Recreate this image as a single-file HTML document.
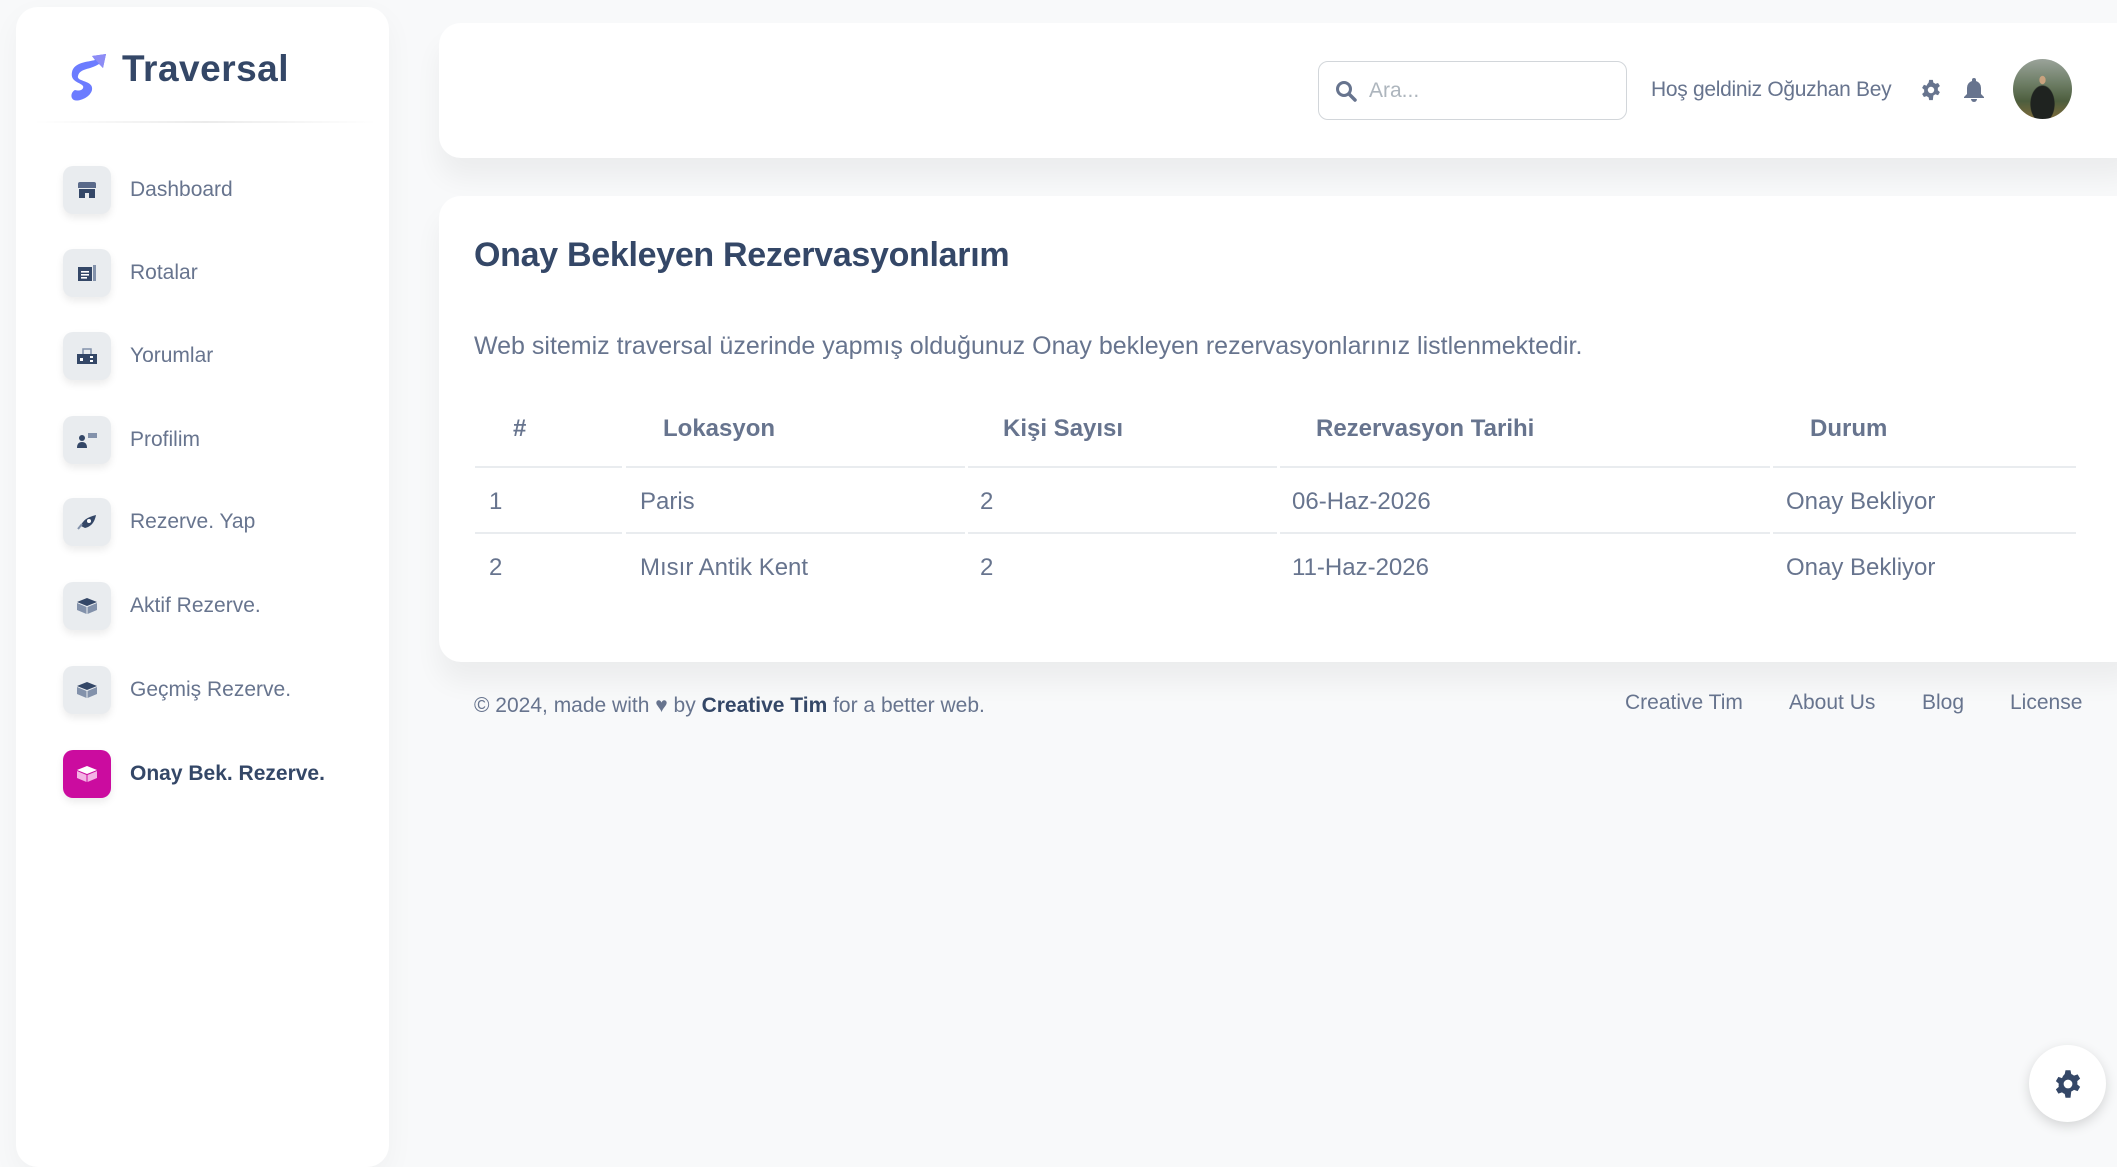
<!DOCTYPE html>
<html><head><meta charset="utf-8"><style>
*{box-sizing:border-box;margin:0;padding:0}
body{width:2117px;height:1136px;background:#f8f9fa;font-family:"Liberation Sans",sans-serif;color:#67748e;position:relative;overflow:hidden}
.side{position:absolute;left:16px;top:7px;width:373px;height:1160px;background:#fff;border-radius:22px;box-shadow:0 10px 30px rgba(0,0,0,.04)}
.logo{position:absolute;left:70px;top:54px}
.brand{position:absolute;left:122px;top:48px;font-size:37px;color:#344767;font-weight:600;letter-spacing:.5px}
.div{position:absolute;left:32px;top:121px;width:346px;height:2px;background:linear-gradient(90deg,rgba(0,0,0,0),rgba(0,0,0,.08),rgba(0,0,0,0))}
.nav{position:absolute;left:63px;height:48px;display:flex;align-items:center}
.ib{width:48px;height:48px;border-radius:10px;background:#e9ecef;box-shadow:0 4px 8px rgba(0,0,0,.08);display:flex;align-items:center;justify-content:center}
.nav span{margin-left:19px;font-size:21px;color:#67748e}
.nav.act .ib{background:#cb0c9f}
.nav.act span{color:#344767;font-weight:700}
.card{position:absolute;background:#fff;border-radius:22px;box-shadow:0 20px 27px rgba(0,0,0,.05)}
.search{position:absolute;left:1318px;top:61px;width:309px;height:59px;border:1px solid #d2d6da;border-radius:10px;background:#fff}
.search span{position:absolute;left:50px;top:17px;font-size:21px;color:#adb5bd}
.hello{position:absolute;left:1651px;top:78px;font-size:21px;color:#67748e;letter-spacing:-.3px}
.avatar{position:absolute;left:2013px;top:59px;width:59px;height:60px;border-radius:50%;background:radial-gradient(ellipse at 50% 35%,#c9a27e 0 7%,transparent 8%),radial-gradient(ellipse at 50% 75%,#1f2320 0 28%,transparent 30%),linear-gradient(180deg,#9aa39a 0,#6e7e66 40%,#4d5e3e 70%,#7d6a3a 100%)}
h1{position:absolute;left:474px;top:236px;font-size:34px;font-weight:600;color:#344767;letter-spacing:-.3px}
.desc{position:absolute;left:474px;top:332px;font-size:25px;color:#67748e}
.th,.td{position:absolute;font-size:24px;color:#67748e}
.th{font-weight:600;top:415px}
.line{position:absolute;height:2px;background:#e9ecef}
.foot{position:absolute;top:693px;font-size:21px;color:#67748e}
.fab{position:absolute;left:2029px;top:1045px;width:77px;height:77px;border-radius:50%;background:#fff;box-shadow:0 4px 12px rgba(0,0,0,.15);display:flex;align-items:center;justify-content:center}
</style></head><body>
<div class="side">
</div>
<svg class="logo" width="36" height="48" viewBox="0 0 36 48"><path d="M22 2 L36 0 L33 14 L29 10 C20 16 10 14 8 22 C6 28 24 26 22 36 C20 44 8 48 4 46 C0 44 1 38 5 36 C12 38 14 34 13 32 C10 28 0 28 2 18 C4 8 18 8 25 6 Z" fill="#6c7cff"/><path d="M22 2 L36 0 L33 14 Z" fill="#8d8cf5"/></svg>
<div class="brand">Traversal</div>
<div class="div"></div>

<div class="nav" style="top:166px"><div class="ib"><svg width="20" height="16" viewBox="0 0 20 16"><path d="M1 2 Q1 0 3 0 H17 Q19 0 19 2 V6 H1Z" fill="#5a6a8a"/><path d="M2 7 H18 V16 H12 V11 H8 V16 H2Z" fill="#344767"/></svg></div><span>Dashboard</span></div>
<div class="nav" style="top:249px"><div class="ib"><svg width="18" height="16" viewBox="0 0 18 16"><rect x="0" y="2" width="14" height="14" fill="#344767"/><rect x="15" y="0" width="3" height="16" fill="#8392ab"/><rect x="3" y="6" width="8" height="1.6" fill="#fff"/><rect x="3" y="9" width="8" height="1.6" fill="#fff"/><rect x="3" y="12" width="6" height="1.6" fill="#fff"/></svg></div><span>Rotalar</span></div>
<div class="nav" style="top:332px"><div class="ib"><svg width="20" height="16" viewBox="0 0 20 16"><path d="M6 6 V1 H14 V6" stroke="#8392ab" stroke-width="1.5" fill="none"/><rect x="0" y="6" width="20" height="10" fill="#344767"/><rect x="3" y="10" width="3" height="3" fill="#fff"/><rect x="13" y="8" width="3" height="2" fill="#fff"/><rect x="13" y="12" width="3" height="2" fill="#fff"/></svg></div><span>Yorumlar</span></div>
<div class="nav" style="top:416px"><div class="ib"><svg width="20" height="16" viewBox="0 0 20 16"><circle cx="5" cy="6" r="3" fill="#344767"/><path d="M0 16 Q0 10 5 10 Q10 10 10 16Z" fill="#344767"/><rect x="11" y="1" width="9" height="5" fill="#8392ab"/></svg></div><span>Profilim</span></div>
<div class="nav" style="top:498px"><div class="ib"><svg width="20" height="16" viewBox="0 0 20 16"><path d="M4 12 Q6 4 19 1 Q17 12 8 14Z" fill="#344767"/><circle cx="12" cy="7" r="2" fill="#fff"/><path d="M1 15 L5 10" stroke="#8392ab" stroke-width="2"/></svg></div><span>Rezerve. Yap</span></div>
<div class="nav" style="top:582px"><div class="ib"><svg width="20" height="16" viewBox="0 0 20 16"><path d="M10 0 L20 4 L10 8 L0 4Z" fill="#344767"/><path d="M0 5 L9.5 9 V16 L0 12Z" fill="#8392ab"/><path d="M20 5 L10.5 9 V16 L20 12Z" fill="#8392ab"/></svg></div><span>Aktif Rezerve.</span></div>
<div class="nav" style="top:666px"><div class="ib"><svg width="20" height="16" viewBox="0 0 20 16"><path d="M10 0 L20 4 L10 8 L0 4Z" fill="#344767"/><path d="M0 5 L9.5 9 V16 L0 12Z" fill="#8392ab"/><path d="M20 5 L10.5 9 V16 L20 12Z" fill="#8392ab"/></svg></div><span>Geçmiş Rezerve.</span></div>
<div class="nav act" style="top:750px"><div class="ib"><svg width="20" height="16" viewBox="0 0 20 16"><path d="M10 0 L20 4 L10 8 L0 4Z" fill="#fff"/><path d="M0 5 L9.5 9 V16 L0 12Z" fill="#f3b3e4"/><path d="M20 5 L10.5 9 V16 L20 12Z" fill="#f3b3e4"/></svg></div><span>Onay Bek. Rezerve.</span></div>

<div class="card" style="left:439px;top:23px;width:1700px;height:135px"></div>
<div class="search"><svg style="position:absolute;left:16px;top:18px" width="22" height="22" viewBox="0 0 22 22"><circle cx="9" cy="9" r="6.5" stroke="#67748e" stroke-width="3" fill="none"/><path d="M14 14 L20 20" stroke="#67748e" stroke-width="3.5" stroke-linecap="round"/></svg><span>Ara...</span></div>
<div class="hello">Hoş geldiniz Oğuzhan Bey</div>
<svg style="position:absolute;left:1920px;top:79px" width="22" height="22" viewBox="0 0 24 24"><path fill="#67748e" d="M10 1h4l.6 3a8 8 0 0 1 2.2 1.3l2.9-1 2 3.4-2.3 2a8 8 0 0 1 0 2.6l2.3 2-2 3.4-2.9-1a8 8 0 0 1-2.2 1.3L14 23h-4l-.6-3a8 8 0 0 1-2.2-1.3l-2.9 1-2-3.4 2.3-2a8 8 0 0 1 0-2.6l-2.3-2 2-3.4 2.9 1A8 8 0 0 1 9.4 4Z"/><circle cx="12" cy="12" r="3.5" fill="#fff"/></svg>
<svg style="position:absolute;left:1964px;top:78px" width="20" height="24" viewBox="0 0 20 24"><path fill="#67748e" d="M10 0a2 2 0 0 1 2 2v1a7 7 0 0 1 5 7v6l3 3v1H0v-1l3-3v-6a7 7 0 0 1 5-7V2a2 2 0 0 1 2-2Z"/><path fill="#67748e" d="M7 21h6a3 3 0 0 1-6 0Z"/></svg>
<div class="avatar"></div>

<div class="card" style="left:439px;top:196px;width:1700px;height:466px"></div>
<h1>Onay Bekleyen Rezervasyonlarım</h1>
<div class="desc">Web sitemiz traversal üzerinde yapmış olduğunuz Onay bekleyen rezervasyonlarınız listlenmektedir.</div>

<div class="th" style="left:513px">#</div>
<div class="th" style="left:663px">Lokasyon</div>
<div class="th" style="left:1003px">Kişi Sayısı</div>
<div class="th" style="left:1316px">Rezervasyon Tarihi</div>
<div class="th" style="left:1810px">Durum</div>
<div class="line" style="left:475px;top:466px;width:147px"></div>
<div class="line" style="left:626px;top:466px;width:339px"></div>
<div class="line" style="left:968px;top:466px;width:309px"></div>
<div class="line" style="left:1280px;top:466px;width:490px"></div>
<div class="line" style="left:1773px;top:466px;width:303px"></div>
<div class="line" style="left:475px;top:532px;width:147px"></div>
<div class="line" style="left:626px;top:532px;width:339px"></div>
<div class="line" style="left:968px;top:532px;width:309px"></div>
<div class="line" style="left:1280px;top:532px;width:490px"></div>
<div class="line" style="left:1773px;top:532px;width:303px"></div>
<div class="td" style="left:489px;top:488px">1</div>
<div class="td" style="left:640px;top:488px">Paris</div>
<div class="td" style="left:980px;top:488px">2</div>
<div class="td" style="left:1292px;top:488px">06-Haz-2026</div>
<div class="td" style="left:1786px;top:488px">Onay Bekliyor</div>
<div class="td" style="left:489px;top:554px">2</div>
<div class="td" style="left:640px;top:554px">Mısır Antik Kent</div>
<div class="td" style="left:980px;top:554px">2</div>
<div class="td" style="left:1292px;top:554px">11-Haz-2026</div>
<div class="td" style="left:1786px;top:554px">Onay Bekliyor</div>

<div class="foot" style="left:474px;top:694px">© 2024, made with <span style="color:#67748e">♥</span> by <b style="color:#344767">Creative Tim</b> for a better web.</div>
<div class="foot" style="left:1625px;top:691px">Creative Tim</div>
<div class="foot" style="left:1789px;top:691px">About Us</div>
<div class="foot" style="left:1922px;top:691px">Blog</div>
<div class="foot" style="left:2010px;top:691px">License</div>

<div class="fab"><svg width="30" height="30" viewBox="0 0 24 24"><path fill="#344767" d="M10 1h4l.6 3a8 8 0 0 1 2.2 1.3l2.9-1 2 3.4-2.3 2a8 8 0 0 1 0 2.6l2.3 2-2 3.4-2.9-1a8 8 0 0 1-2.2 1.3L14 23h-4l-.6-3a8 8 0 0 1-2.2-1.3l-2.9 1-2-3.4 2.3-2a8 8 0 0 1 0-2.6l-2.3-2 2-3.4 2.9 1A8 8 0 0 1 9.4 4Z"/><circle cx="12" cy="12" r="3.5" fill="#fff"/></svg></div>
</body></html>
